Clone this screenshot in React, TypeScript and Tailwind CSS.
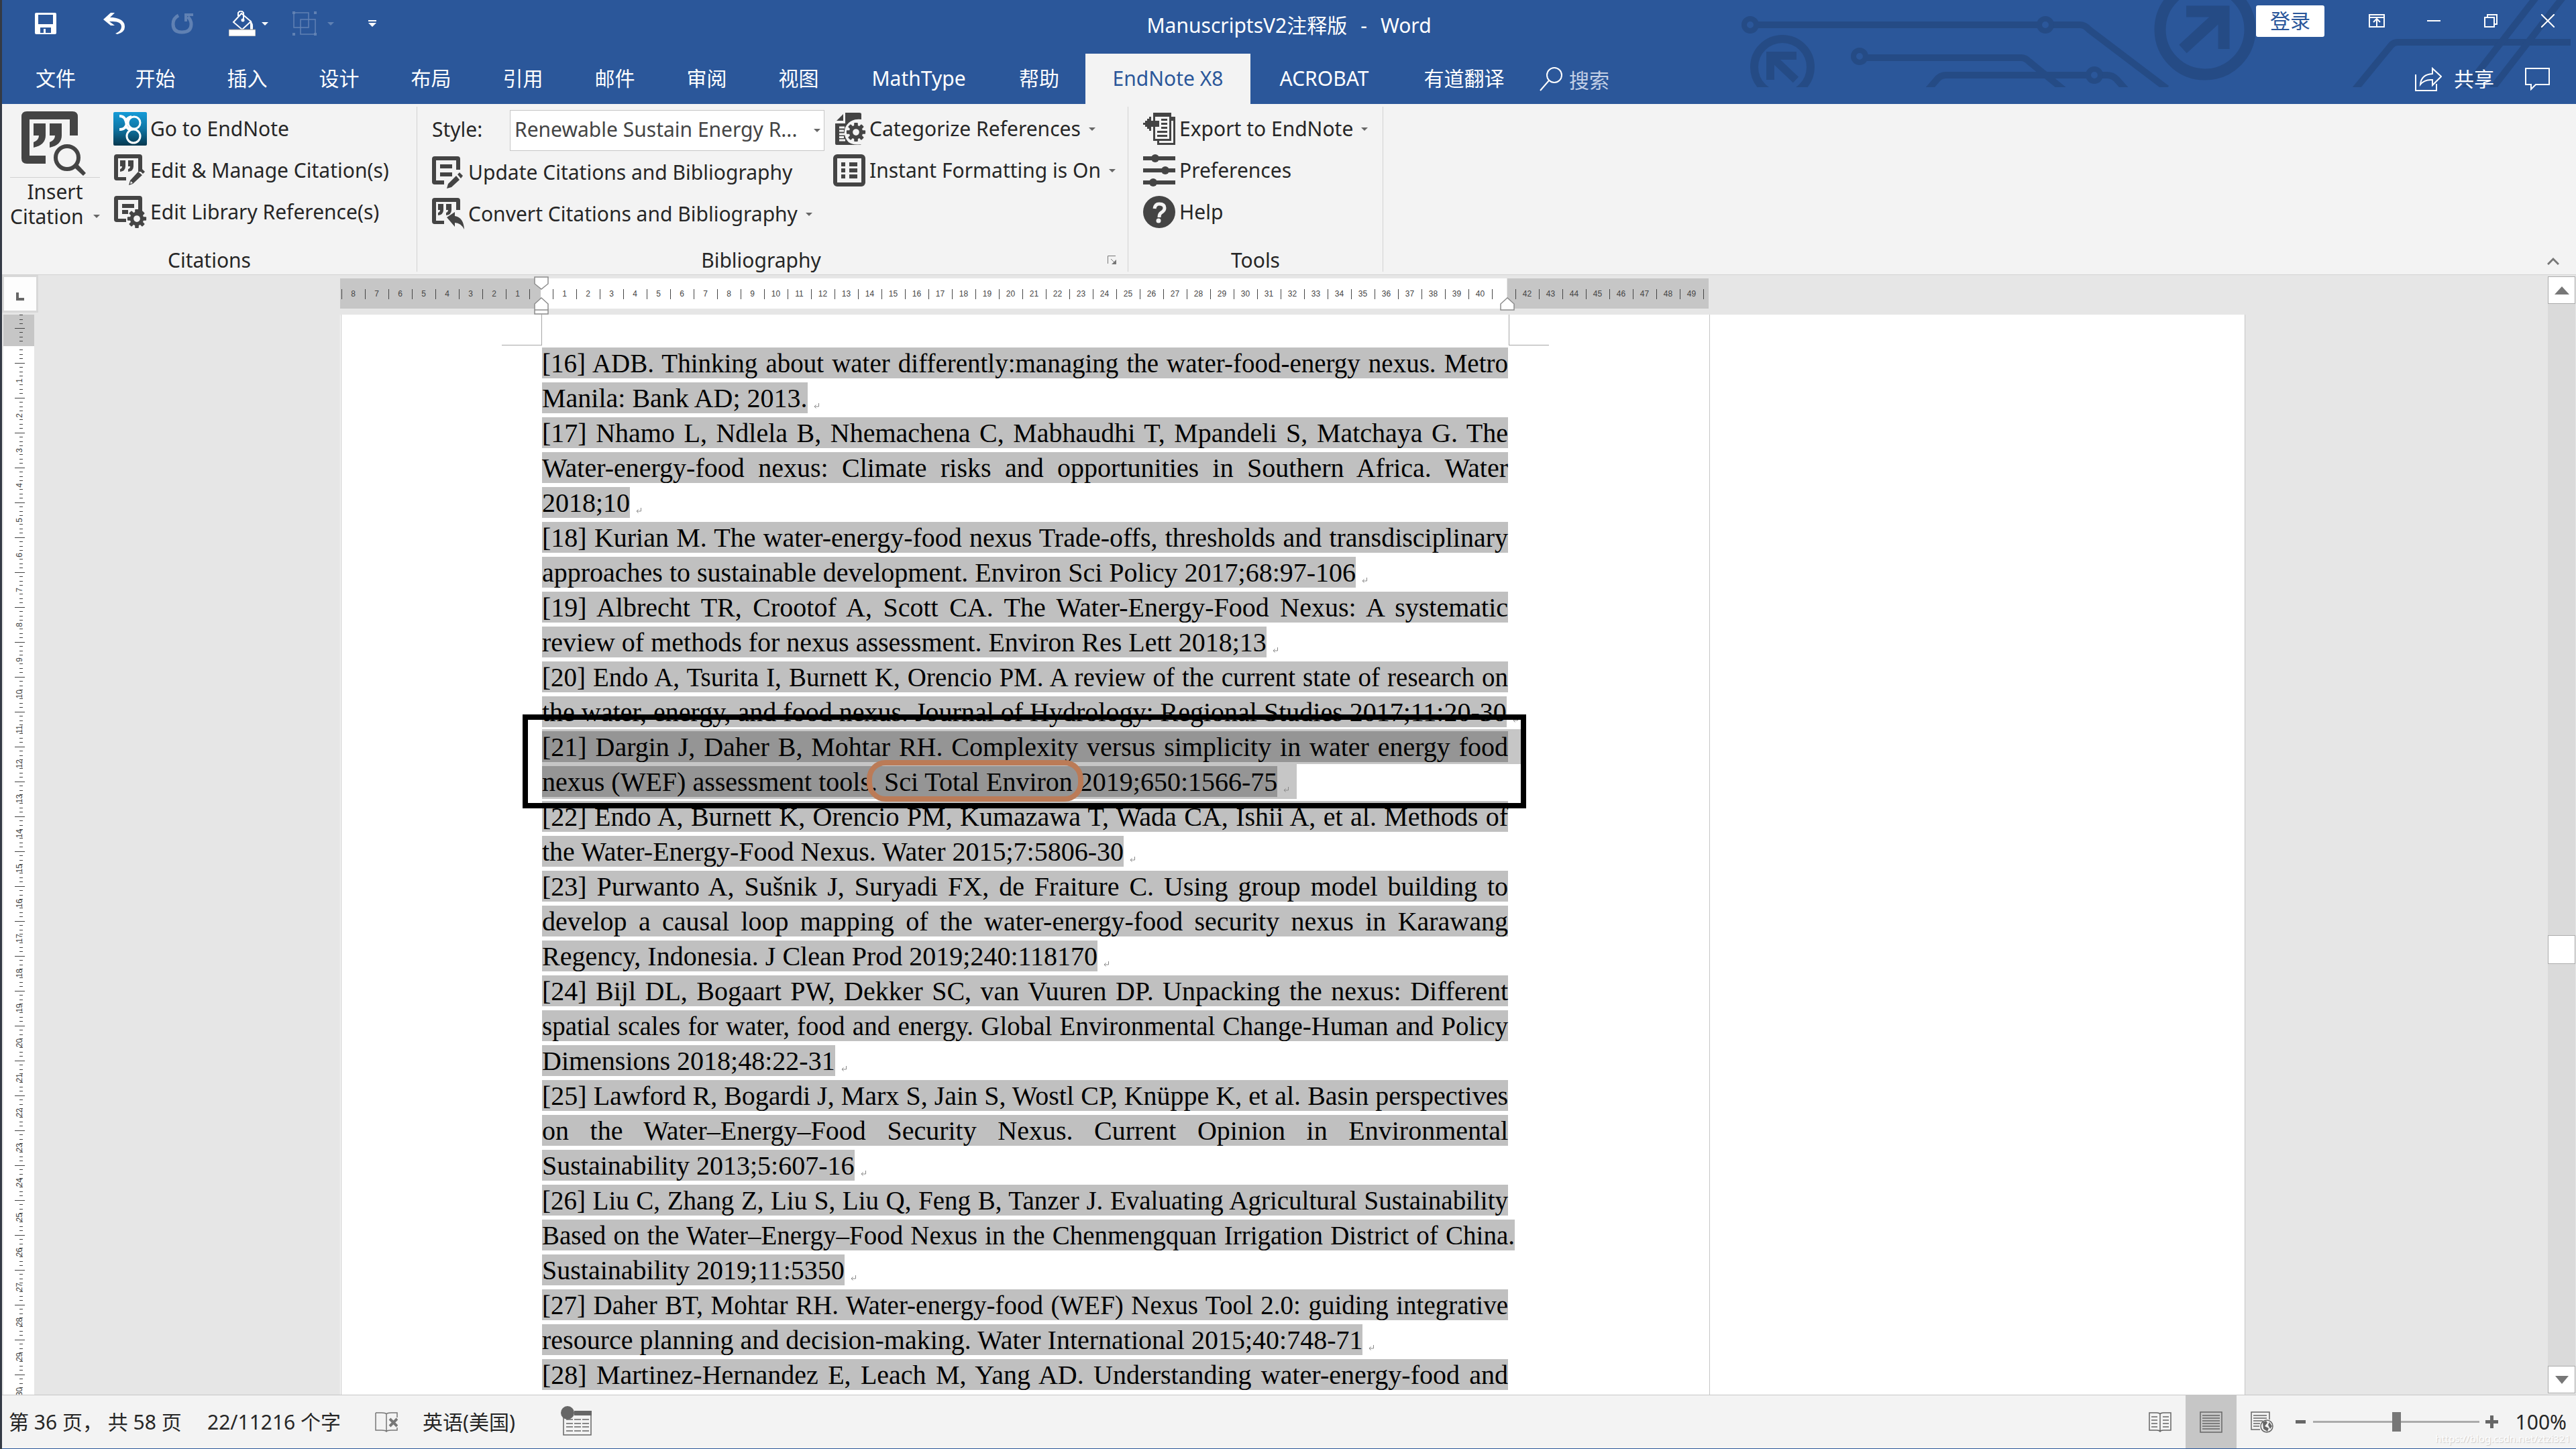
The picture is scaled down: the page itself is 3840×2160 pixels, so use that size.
import React from 'react';

type IconProps = { className?: string };

interface RefLine {
  text: string;
  fill?: boolean;
  tight?: boolean;
  hang?: boolean;
  mark?: boolean;
  active?: boolean;
}

const REFERENCES: RefLine[][] = [
  [
    { text: '[16] ADB. Thinking about water differently:managing the water-food-energy nexus. Metro', fill: true, tight: true },
    { text: 'Manila: Bank AD; 2013.', mark: true },
  ],
  [
    { text: '[17] Nhamo L, Ndlela B, Nhemachena C, Mabhaudhi T, Mpandeli S, Matchaya G. The', fill: true },
    { text: 'Water-energy-food nexus: Climate risks and opportunities in Southern Africa. Water', fill: true },
    { text: '2018;10', mark: true },
  ],
  [
    { text: '[18] Kurian M. The water-energy-food nexus Trade-offs, thresholds and transdisciplinary', fill: true },
    { text: 'approaches to sustainable development. Environ Sci Policy 2017;68:97-106', mark: true },
  ],
  [
    { text: '[19] Albrecht TR, Crootof A, Scott CA. The Water-Energy-Food Nexus: A systematic', fill: true },
    { text: 'review of methods for nexus assessment. Environ Res Lett 2018;13', mark: true },
  ],
  [
    { text: '[20] Endo A, Tsurita I, Burnett K, Orencio PM. A review of the current state of research on', fill: true, tight: true },
    { text: 'the water, energy, and food nexus. Journal of Hydrology: Regional Studies 2017;11:20-30', mark: true },
  ],
  [
    { text: '[21] Dargin J, Daher B, Mohtar RH. Complexity versus simplicity in water energy food', fill: true, active: true },
    { text: 'nexus (WEF) assessment tools. Sci Total Environ 2019;650:1566-75', mark: true, active: true },
  ],
  [
    { text: '[22] Endo A, Burnett K, Orencio PM, Kumazawa T, Wada CA, Ishii A, et al. Methods of', fill: true },
    { text: 'the Water-Energy-Food Nexus. Water 2015;7:5806-30', mark: true },
  ],
  [
    { text: '[23] Purwanto A, Sušnik J, Suryadi FX, de Fraiture C. Using group model building to', fill: true },
    { text: 'develop a causal loop mapping of the water-energy-food security nexus in Karawang', fill: true },
    { text: 'Regency, Indonesia. J Clean Prod 2019;240:118170', mark: true },
  ],
  [
    { text: '[24] Bijl DL, Bogaart PW, Dekker SC, van Vuuren DP. Unpacking the nexus: Different', fill: true },
    { text: 'spatial scales for water, food and energy. Global Environmental Change-Human and Policy', fill: true, tight: true },
    { text: 'Dimensions 2018;48:22-31', mark: true },
  ],
  [
    { text: '[25] Lawford R, Bogardi J, Marx S, Jain S, Wostl CP, Knüppe K, et al. Basin perspectives', fill: true },
    { text: 'on the Water–Energy–Food Security Nexus. Current Opinion in Environmental', fill: true },
    { text: 'Sustainability 2013;5:607-16', mark: true },
  ],
  [
    { text: '[26] Liu C, Zhang Z, Liu S, Liu Q, Feng B, Tanzer J. Evaluating Agricultural Sustainability', fill: true, tight: true },
    { text: 'Based on the Water–Energy–Food Nexus in the Chenmengquan Irrigation District of China.', fill: true, tight: true, hang: true },
    { text: 'Sustainability 2019;11:5350', mark: true },
  ],
  [
    { text: '[27] Daher BT, Mohtar RH. Water-energy-food (WEF) Nexus Tool 2.0: guiding integrative', fill: true, tight: true },
    { text: 'resource planning and decision-making. Water International 2015;40:748-71', mark: true },
  ],
  [{ text: '[28] Martinez-Hernandez E, Leach M, Yang AD. Understanding water-energy-food and', fill: true }],
];

const CJK_TABS = ['开始', '插入', '设计', '布局', '引用', '邮件', '审阅', '视图'];

const range = (from: number, to: number) => Array.from({ length: to - from + 1 }, (_, i) => from + i);

/* ---------- icons ---------- */

const Caret: React.FC<IconProps> = ({ className = 'text-[#666666]' }) => (
  <svg viewBox="0 0 10 5" className={`h-[5px] w-[10px] shrink-0 ${className}`} fill="currentColor">
    <path d="M0 0h10L5 5z" />
  </svg>
);

const Gear = ({ cx, cy, r }: { cx: number; cy: number; r: number }) => (
  <g transform={`translate(${cx} ${cy}) scale(${r / 12})`}>
    {[0, 45, 90, 135, 180, 225, 270, 315].map((a) => (
      <rect key={a} x="-2.6" y="-13" width="5.2" height="7" rx="1" transform={`rotate(${a})`} />
    ))}
    <circle r="7" fill="none" stroke="currentColor" strokeWidth="5" />
  </g>
);

const RibbonSvg: React.FC<{ children: React.ReactNode }> = ({ children }) => (
  <svg viewBox="0 0 48 48" className="h-12 w-12 shrink-0 overflow-visible text-[#444444]" fill="currentColor">
    {children}
  </svg>
);

const SheetFrame = () => (
  <path d="M4 0h34q4 0 4 4v22h-6V6H6v28h12v5H4q-4 0-4-4V4q0-4 4-4z" />
);

const InsertCitationIcon = () => (
  <svg viewBox="0 0 96 96" className="size-24 text-[#444444]" fill="currentColor">
    <path d="M8 0h68q8 0 8 8v28H72V12H12v54h24v12H8q-8 0-8-8V8q0-8 8-8z" />
    <path d="M18 18h18v18q0 14-18 18v-8q8-3 8-10h-8zM42 18h18v18q0 14-18 18v-8q8-3 8-10h-8z" />
    <circle cx="68" cy="69" r="17" fill="#f3f3f3" stroke="currentColor" strokeWidth="6" />
    <path d="M79 84l5-5 12 13-4 4z" />
  </svg>
);

const EndNoteIcon = () => (
  <svg viewBox="0 0 50 50" className="-mx-px size-[50px] shrink-0">
    <defs>
      <linearGradient id="endnote" x1="0" y1="0" x2="0" y2="1">
        <stop offset="0" stopColor="#159bd7" />
        <stop offset="0.5" stopColor="#0f75a4" />
        <stop offset="1" stopColor="#06384f" />
      </linearGradient>
    </defs>
    <rect width="50" height="50" rx="2" fill="url(#endnote)" />
    <g fill="none" stroke="#fff" strokeWidth="3">
      <circle cx="31" cy="16" r="9" />
      <circle cx="30" cy="36" r="10" />
      <path d="M9 6q7 0 9 6 3 7 0 10-2 4-9 4M27 7q-6 1-8 6M19 20q2 6 7 6" strokeWidth="4" />
    </g>
  </svg>
);

const EditCitationIcon = () => (
  <RibbonSvg>
    <SheetFrame />
    <path d="M9 9h8v9q0 7-8 8v-4q3-1 3-4H9zM21 9h8v9q0 7-8 8v-4q3-1 3-4h-3z" />
    <path d="M41 21l5 5-3 3-5-5zM36 26l6 5-14 13-6 2 2-7z" />
    <path d="M25 40l3 3-4 1z" fill="#f3f3f3" />
  </RibbonSvg>
);

const EditLibraryIcon = () => (
  <RibbonSvg>
    <SheetFrame />
    <path d="M12 12h18v6H12zM12 21h9v6h-9z" />
    <Gear cx={34} cy={34} r={13} />
  </RibbonSvg>
);

const UpdateIcon = () => (
  <RibbonSvg>
    <path d="M4 0h34q4 0 4 4v16h-6V6H6v30h12v6H4q-4 0-4-4V4q0-4 4-4z" />
    <path d="M12 12h18v6H12zM12 24h18v6H12z" />
    <path d="M41 24l5 5-3 4-5-6zM36 29l5 6-12 11-7 2 2-7z" />
  </RibbonSvg>
);

const ConvertIcon = () => (
  <RibbonSvg>
    <path d="M4 0h34q4 0 4 4v14h-6V6H6v28h12v5H4q-4 0-4-4V4q0-4 4-4z" />
    <path d="M9 9h8v9q0 7-8 8v-4q3-1 3-4H9zM21 9h8v9q0 7-8 8v-4q3-1 3-4h-3z" />
    <path d="M22 29l12-8v6q13 2 14 20-5-10-14-10v6z" />
  </RibbonSvg>
);

const CategorizeIcon = () => (
  <RibbonSvg>
    <path d="M5 12L15 2v10zM18 0h21q3 0 3 2v8q-17-2-24 12-4 13 5 22 7 5 19 3-1 1-3 1H5q-2 0-2-2V16h15z" />
    <path d="M9 22h8M9 27h7M9 32h8M9 36.500h7M9 41h9" stroke="#f3f3f3" strokeWidth="3" />
    <Gear cx={34} cy={29} r={13} />
  </RibbonSvg>
);

const InstantIcon = () => (
  <RibbonSvg>
    <rect x="3" y="3" width="42" height="42" rx="3" fill="none" stroke="currentColor" strokeWidth="6" />
    <path d="M12 12h6v6h-6zM24 12h12v6H24zM12 21h6v6h-6zM24 21h12v6H24zM12 30h6v6h-6zM24 30h12v6H24z" />
  </RibbonSvg>
);

const ExportIcon = () => (
  <RibbonSvg>
    <path d="M15 0h27v6h6v42H21v-6h-6V21h-3v6H9v-3H6v-3H3v-3H0v-3h3v-3h3V9h3V6h3v6h3z" />
    <path d="M18 6h21v33H18V21h6v-9h-6zM42 12h3v33H24v-3h18z" fill="#f3f3f3" />
    <path d="M27 9h9v3h-9zM27 15h9v3h-9zM27 21h9v3h-9zM21 27h15v3H21zM21 33h15v3H21z" />
  </RibbonSvg>
);

const PreferencesIcon = () => (
  <RibbonSvg>
    <path d="M0 3h48v6H0zM0 21h48v6H0zM0 39h48v6H0z" />
    <circle cx="18" cy="6" r="6" />
    <circle cx="33" cy="24" r="6" />
    <circle cx="15" cy="42" r="6" />
  </RibbonSvg>
);

const HelpIcon = () => (
  <RibbonSvg>
    <circle cx="24" cy="24" r="24" />
    <path d="M17 19q1-7 7-7 8 0 8 6 0 4-5 7-3 2-3 7" fill="none" stroke="#f3f3f3" strokeWidth="5" />
    <circle cx="23" cy="37" r="3.500" fill="#f3f3f3" />
  </RibbonSvg>
);

const CircuitArt = () => (
  <svg
    viewBox="0 0 1250 130"
    className="pointer-events-none absolute top-0 right-0 h-[130px] w-[1250px]"
    fill="none"
    stroke="#254b85"
    strokeWidth="10"
  >
    <circle cx="19" cy="37" r="9" strokeWidth="8" />
    <path d="M30 37h418M470 37h40q8 0 14 7l116 88" />
    <circle cx="459" cy="37" r="9" strokeWidth="8" />
    <circle cx="182" cy="84" r="9" strokeWidth="8" />
    <path d="M193 86h230q6 0 12 6l54 44" />
    <path d="M284 134l12-14q6-8 14-8h211M543 112h8q8 0 14 6l16 18" />
    <circle cx="532" cy="112" r="9" strokeWidth="8" />
    <circle cx="67" cy="100" r="42" strokeWidth="12" />
    <path d="M88 83H49v36M49 83l38 36" strokeWidth="12" />
    <circle cx="697" cy="44" r="67" strokeWidth="17" />
    <path d="M669 17h56v56M725 17l-61 56" strokeWidth="17" />
    <path d="M920 134l54-66q4-5 10-5h258" />
    <path d="M1192-6l-110 142M1232-6l-110 142" />
  </svg>
);

/* ---------- title bar ---------- */

const QuickAccess = () => (
  <div className="flex h-[70px] items-center pl-[49px] text-white">
    <button aria-label="保存" className="mr-[70px]">
      <svg viewBox="0 0 32 32" className="size-8" fill="currentColor">
        <path d="M2 0h28q2 0 2 2v28q0 2-2 2H2q-2 0-2-2V2q0-2 2-2zm3 3v14h22V3zm3 19v8h5v-6h3v6h8v-8z" fillRule="evenodd" />
      </svg>
    </button>
    <button aria-label="撤消" className="mr-[69px]">
      <svg viewBox="0 0 32 32" className="size-8" fill="currentColor">
        <path d="M0 10L11 0h6l-7 7h4q18 2 18 14 0 8-11 11l-3-1q9-4 9-10 0-8-13-8H9l8 6h-6z" />
      </svg>
    </button>
    <button aria-label="重复" className="mr-[52px] opacity-25">
      <svg viewBox="0 0 34 32" className="h-8 w-[34px]" fill="none" stroke="currentColor" strokeWidth="5">
        <path d="M11 4Q3 8 3 17q0 12 13 12 14 0 14-12 0-6-5-11" />
        <path d="M33 3H22v10" strokeWidth="4" />
      </svg>
    </button>
    <button aria-label="形状填充" className="mr-[36px] flex items-center gap-[9px]">
      <svg viewBox="0 0 40 38" className="h-[38px] w-10" fill="none" stroke="currentColor" strokeWidth="2">
        <path d="M19 4L33 16 20 28 7 17zM14 8V3q4-5 8 0v11" />
        <circle cx="21" cy="14" r="1.500" fill="currentColor" />
        <path d="M32 14q5 4 4 14h-4z" fill="currentColor" stroke="none" />
        <path d="M0 28h40v10H0z" fill="#fff" stroke="#8a8a8a" strokeWidth="1" />
      </svg>
      <Caret className="text-white" />
    </button>
    <button aria-label="组合" className="mr-[51px] flex items-center gap-[16px] opacity-25">
      <svg viewBox="0 0 36 36" className="size-9" fill="none" stroke="currentColor" strokeWidth="1.500">
        <path d="M2 2h22v22H2zM12 12h22v22H12z" />
        <path d="M0 0h4v4H0zM32 0h4v4h-4zM0 32h4v4H0zM32 32h4v4h-4z" fill="currentColor" stroke="none" />
      </svg>
      <Caret className="text-white" />
    </button>
    <button aria-label="自定义快速访问工具栏">
      <svg viewBox="0 0 12 10" className="h-[10px] w-3" fill="currentColor">
        <path d="M0 0h12v2H0zM0 4h12l-6 6z" />
      </svg>
    </button>
  </div>
);

const WindowControls = () => (
  <div className="flex h-[62px] items-center justify-end pr-[32px] text-white">
    <button className="mr-[66px] h-[47px] w-[102px] rounded-[3px] bg-white text-[#2b579a]">登录</button>
    <button aria-label="功能区显示选项" className="mr-[63px]">
      <svg viewBox="0 0 24 20" className="h-5 w-6" fill="none" stroke="currentColor" strokeWidth="2">
        <path d="M1 1h22v18H1zM1 5h22M12 18V8M7 12l5-5 5 5" />
      </svg>
    </button>
    <button aria-label="最小化" className="mr-[65px] h-5 w-5">
      <span className="block h-[2px] w-full bg-white" />
    </button>
    <button aria-label="向下还原" className="mr-[65px]">
      <svg viewBox="0 0 20 20" className="size-5" fill="none" stroke="currentColor" strokeWidth="2">
        <path d="M1 5h14v14H1zM5 5V1h14v14h-4" />
      </svg>
    </button>
    <button aria-label="关闭">
      <svg viewBox="0 0 20 20" className="size-5" fill="none" stroke="currentColor" strokeWidth="2">
        <path d="M0 0l20 20M20 0L0 20" />
      </svg>
    </button>
  </div>
);

const TabBar = () => (
  <nav className="relative flex h-[75px] items-stretch text-white [&>button]:pb-[2px]">
    <button className="w-[160px]">文件</button>
    {CJK_TABS.map((tab) => (
      <button key={tab} className="w-[137px]">
        {tab}
      </button>
    ))}
    <button className="w-[221px]">MathType</button>
    <button className="w-[138px]">帮助</button>
    <button className="w-[246px] bg-[#f3f3f3] text-[#2b579a]">EndNote X8</button>
    <button className="w-[220px]">ACROBAT</button>
    <button className="w-[197px]">有道翻译</button>
    <label className="ml-[14px] flex items-center gap-[10px]">
      <svg viewBox="0 0 34 36" className="h-9 w-[34px]" fill="none" stroke="currentColor" strokeWidth="2">
        <circle cx="22" cy="12" r="11" />
        <path d="M14 20L1 35" />
      </svg>
      <input
        type="text"
        placeholder="搜索"
        aria-label="搜索"
        className="mt-1 w-[180px] bg-transparent outline-none placeholder:text-[#c3d0e6] placeholder:opacity-100"
      />
    </label>
    <div className="ml-auto flex items-center pr-[39px]">
      <button className="mr-[46px] flex items-center gap-[18px]">
        <svg viewBox="0 0 40 36" className="h-9 w-10" fill="none" stroke="currentColor" strokeWidth="2">
          <path d="M1 11v24h31V25" />
          <path d="M8 26q1-15 18-16V2l13 12-13 13v-8q-12-1-18 7z" />
        </svg>
        共享
      </button>
      <button aria-label="批注">
        <svg viewBox="0 0 37 34" className="h-[34px] w-[37px]" fill="none" stroke="currentColor" strokeWidth="2">
          <path d="M1 1h35v24H16l-7 7v-7H1z" />
        </svg>
      </button>
    </div>
  </nav>
);

/* ---------- ribbon ---------- */

const RibbonButton: React.FC<{ icon: React.ReactNode; label: string; menu?: boolean }> = ({ icon, label, menu }) => (
  <button className="flex h-[62px] items-center gap-[6px] whitespace-nowrap">
    {icon}
    <span>{label}</span>
    {menu && <Caret className="ml-[6px] text-[#666666]" />}
  </button>
);

const GroupLabel: React.FC<{ children: React.ReactNode }> = ({ children }) => (
  <div className="flex h-[42px] items-center justify-center">{children}</div>
);

const Divider = () => <div className="my-1 w-px bg-[#d2d2d2]" />;

const Ribbon = () => (
  <section className="flex h-[255px] border-b border-[#d2d2d2] bg-[#f3f3f3] text-[#262626]">
    <div className="flex w-[618px] flex-col">
      <div className="flex flex-1 pt-[6px]">
        <button className="ml-[12px] flex w-[134px] flex-col pt-[5px]">
          <span className="flex h-[99px] w-full justify-center border-b border-[#d2d2d2] pr-1">
            <InsertCitationIcon />
          </span>
          <span className="mt-[2px] w-full text-center leading-[37px]">Insert</span>
          <span className="flex w-full items-center justify-between leading-[37px]">
            Citation
            <Caret />
          </span>
        </button>
        <div className="ml-[21px] flex flex-col items-start">
          <RibbonButton icon={<EndNoteIcon />} label="Go to EndNote" />
          <RibbonButton icon={<EditCitationIcon />} label="Edit & Manage Citation(s)" />
          <RibbonButton icon={<EditLibraryIcon />} label="Edit Library Reference(s)" />
        </div>
      </div>
      <GroupLabel>Citations</GroupLabel>
    </div>
    <Divider />
    <div className="flex w-[1059px] flex-col">
      <div className="flex flex-1">
        <div className="ml-[22px] flex w-[598px] flex-col items-start pt-2">
          <div className="mb-px flex h-[62px] items-center">
            <label htmlFor="output-style" className="w-[116px] pb-[2px]">
              Style:
            </label>
            <div className="grid w-[469px] items-center">
              <select
                id="output-style"
                className="h-[61px] w-full appearance-none rounded-none border border-[#c6c6c6] bg-white pb-[3px] pl-[6px] text-[#444444] [grid-area:1/1]"
              >
                <option>Renewable Sustain Energy R...</option>
              </select>
              <span className="pointer-events-none justify-self-end pr-[6px] [grid-area:1/1]">
                <Caret />
              </span>
            </div>
          </div>
          <RibbonButton icon={<UpdateIcon />} label="Update Citations and Bibliography" />
          <RibbonButton icon={<ConvertIcon />} label="Convert Citations and Bibliography" menu />
        </div>
        <div className="flex flex-col items-start pt-[6px]">
          <RibbonButton icon={<CategorizeIcon />} label="Categorize References" menu />
          <RibbonButton icon={<InstantIcon />} label="Instant Formatting is On" menu />
        </div>
      </div>
      <div className="flex items-center pr-4">
        <div className="flex-1 pl-[22px]">
          <GroupLabel>Bibliography</GroupLabel>
        </div>
        <button aria-label="Bibliography settings" className="ml-[26px]">
          <svg viewBox="0 0 14 14" className="size-[14px] text-[#777777]" fill="none" stroke="currentColor">
            <path d="M.5 12V.5H12M5 5l7 7" />
            <path d="M13 6v7H6z" fill="currentColor" stroke="none" />
          </svg>
        </button>
      </div>
    </div>
    <Divider />
    <div className="flex w-[379px] flex-col">
      <div className="ml-[22px] flex flex-1 flex-col items-start pt-[6px]">
        <RibbonButton icon={<ExportIcon />} label="Export to EndNote" menu />
        <RibbonButton icon={<PreferencesIcon />} label="Preferences" />
        <RibbonButton icon={<HelpIcon />} label="Help" />
      </div>
      <GroupLabel>Tools</GroupLabel>
    </div>
    <Divider />
    <button aria-label="折叠功能区" className="mt-auto mr-[25px] mb-[14px] ml-auto">
      <svg viewBox="0 0 18 12" className="h-3 w-[18px] text-[#777777]" fill="none" stroke="currentColor" strokeWidth="3">
        <path d="M1 11l8-8 8 8" />
      </svg>
    </button>
  </section>
);

/* ---------- rulers ---------- */

const VTicks: React.FC<{ short: number[]; long?: number; height: number }> = ({ short, long, height }) => (
  <svg width="46" height={height} className="block [grid-area:1/1]" fill="#444444">
    {short.map((y) => (
      <rect key={y} x="24" y={y} width="5" height="1" />
    ))}
    {long !== undefined && <rect x="17" y={long} width="15" height="1" />}
  </svg>
);

const VerticalRuler = () => (
  <div className="ml-[2px] min-h-0 w-[46px] flex-1 overflow-hidden bg-white">
    <div className="h-[47px] bg-[#c6c6c6]">
      <VTicks short={[0, 7, 13, 26, 33, 39]} long={20} height={47} />
    </div>
    <VTicks short={[5, 12, 18]} height={25} />
    {range(1, 30).map((n) => (
      <div key={n} className="grid h-[52px] items-center">
        <VTicks short={[6, 13, 19, 32, 39, 45]} long={0} height={52} />
        <span className="ml-[17px] w-[15px] rotate-180 text-center font-['Liberation_Sans',sans-serif] text-[12px] leading-[15px] text-[#444444] [grid-area:1/1] [writing-mode:vertical-rl]">
          {n}
        </span>
      </div>
    ))}
  </div>
);

const RulerCell: React.FC<{ n: number }> = ({ n }) => (
  <span className="flex h-[15px] w-[35px] items-center justify-center border-l border-[#444444] pr-px">{n}</span>
);

const IndentMarker: React.FC<{ kind: 'first' | 'hanging' | 'right' }> = ({ kind }) => (
  <svg
    viewBox="0 0 22 26"
    className="block h-[26px] w-[22px]"
    fill="#fff"
    stroke="#8c8c8c"
    strokeWidth="1.500"
  >
    {kind === 'first' && <path d="M1 1h20v10L11 19 1 11z" />}
    {kind === 'hanging' && <path d="M11 1l10 9v15H1V10zM1 19h20" />}
    {kind === 'right' && <path d="M11 1l10 9v9H1v-9z" />}
  </svg>
);

const HorizontalRuler = () => (
  <div className="relative flex h-[59px] pt-[5px] pb-[9px] font-['Liberation_Sans',sans-serif] text-[12px] leading-[15px] text-[#444444]">
    <div className="flex w-[299px] items-center bg-[#c6c6c6] pt-[2px] pl-[2px]">
      {range(1, 8).reverse().map((n) => (
        <RulerCell key={n} n={n} />
      ))}
      <span className="h-[15px] border-l border-[#444444]" />
    </div>
    <div className="flex w-[1440px] items-center bg-white pt-[2px] pl-[18px]">
      {range(1, 40).map((n) => (
        <RulerCell key={n} n={n} />
      ))}
      <span className="h-[15px] border-l border-[#444444]" />
    </div>
    <div className="ml-px flex w-[300px] items-center bg-[#c6c6c6] pt-[2px] pl-[12px]">
      {range(42, 49).map((n) => (
        <RulerCell key={n} n={n} />
      ))}
      <span className="h-[15px] border-l border-[#444444]" />
    </div>
    <div className="absolute top-[2px] left-[289px]">
      <IndentMarker kind="first" />
    </div>
    <div className="absolute top-[33px] left-[289px]">
      <IndentMarker kind="hanging" />
    </div>
    <div className="absolute top-[33px] left-[1729px]">
      <IndentMarker kind="right" />
    </div>
  </div>
);

/* ---------- document ---------- */

const ParagraphMark = () => (
  <svg viewBox="0 0 8 8" className="mt-[24px] ml-[9px] size-2 shrink-0 text-[#888888]" fill="none" stroke="currentColor">
    <path d="M7.500 0v5H1M3.500 2.500L1 5l2.500 2.500" />
  </svg>
);

const Line: React.FC<{ line: RefLine }> = ({ line }) => {
  const row = line.active ? (line.fill ? 'w-[1459px] bg-[#c6c6c6]' : 'w-fit bg-[#c6c6c6] pr-[12px]') : 'w-[1440px]';
  const fill = line.fill ? `shrink-0 [text-align-last:justify] ${line.hang ? 'w-[1450px]' : 'w-[1440px]'}` : '';

  return (
    <span className={`flex h-[52px] items-center whitespace-nowrap ${row}`}>
      <span
        className={`block h-[46px] leading-[48px] ${line.active ? 'bg-[#959595]' : 'bg-[#c0c0c0]'} ${
          line.tight ? 'text-[39px]' : ''
        } ${fill}`}
      >
        {line.text}
      </span>
      {line.mark && <ParagraphMark />}
    </span>
  );
};

const Page = () => (
  <div className="flex min-h-0 flex-1 bg-white">
    <div className="ml-px w-[2041px] border-x border-[#c6c6c6]">
      <div className="flex h-[46px] justify-between pr-[239px] pl-[239px]">
        <span className="w-[60px] border-r border-b border-[#a6a6a6]" />
        <span className="w-[60px] border-b border-l border-[#a6a6a6]" />
      </div>
      <article className="relative ml-[299px] w-[1440px] font-['Liberation_Serif',serif] text-[40px] text-black">
        {REFERENCES.map((lines, i) => (
          <p key={i}>
            {lines.map((line) => (
              <Line key={line.text} line={line} />
            ))}
          </p>
        ))}
        <div className="absolute top-[550px] left-[-29px] h-[140px] w-[1496px] border-8 border-black" />
        <div className="absolute top-[618px] left-[484px] h-[62px] w-[323px] rounded-[28px] border-8 border-[#bb7b57]" />
      </article>
    </div>
    <div className="flex-1 border-r border-[#c6c6c6]" />
  </div>
);

const ScrollBar = () => (
  <div className="flex w-[43px] flex-col pt-[2px] pr-px pb-[2px] pl-px">
    <button aria-label="向上滚动" className="flex h-[41px] items-center justify-center border border-[#ababab] bg-white">
      <svg viewBox="0 0 22 12" className="h-3 w-[22px]" fill="#777777">
        <path d="M0 12L11 0l11 12z" />
      </svg>
    </button>
    <div className="flex flex-1 flex-col bg-[#dadada]">
      <div className="grow-[941]" />
      <div className="h-[43px] border border-[#ababab] bg-white" />
      <div className="grow-[599]" />
    </div>
    <button aria-label="向下滚动" className="flex h-[41px] items-center justify-center border border-[#ababab] bg-white">
      <svg viewBox="0 0 20 12" className="h-3 w-5" fill="#777777">
        <path d="M0 0h20L10 12z" />
      </svg>
    </button>
  </div>
);

const Workspace = () => (
  <main className="flex min-h-0 flex-1 overflow-hidden bg-[#e6e6e6]">
    <div className="flex w-[54px] flex-col">
      <button
        aria-label="制表符"
        className="mb-[3px] flex h-[56px] shrink-0 items-center justify-center border-[3px] border-[#d8d8d8] bg-[#fdfdfd]"
      >
        <svg viewBox="0 0 12 12" className="mt-2 size-3" fill="#666666">
          <path d="M0 0h4v8h8v4H0z" />
        </svg>
      </button>
      <VerticalRuler />
    </div>
    <div className="flex min-w-0 flex-1 justify-center">
      <div className="flex w-[2840px] flex-col overflow-hidden">
        <HorizontalRuler />
        <Page />
      </div>
    </div>
    <ScrollBar />
  </main>
);

/* ---------- status bar ---------- */

const StatusBar = () => (
  <footer className="relative flex h-[81px] items-center border-t border-b border-t-[#c6c6c6] border-b-[#2b579a] bg-[#f3f3f3] text-[#262626]">
    <button className="ml-[10px] w-[296px] text-left whitespace-nowrap">第 36 页， 共 58 页</button>
    <button className="w-[250px] text-left whitespace-nowrap">22/11216 个字</button>
    <button aria-label="校对" className="mr-[37px]">
      <svg viewBox="0 0 34 30" className="h-[30px] w-[34px] text-[#777777]" fill="none" stroke="currentColor" strokeWidth="1.500">
        <path d="M1 1h9q6 0 7 2 1-2 7-2h9v7M1 1v26h9q6 0 7 2 1-2 7-2h9v-4M17 3v25" />
        <path d="M22 10l11 11M33 10L22 21" strokeWidth="4" />
      </svg>
    </button>
    <button className="w-[206px] text-left whitespace-nowrap">英语(美国)</button>
    <button aria-label="宏录制" className="pb-[4px]">
      <svg viewBox="0 0 46 44" className="h-11 w-[46px] text-[#666666]" fill="none" stroke="currentColor" strokeWidth="1.500">
        <path d="M4 14v29h41V8H22" />
        <path d="M8 20h34M8 26h34M8 31h34M8 37h34" strokeDasharray="10 2" />
        <path d="M20 7h26v7H20z" fill="currentColor" stroke="none" />
        <circle cx="10" cy="10" r="10" fill="currentColor" stroke="none" />
      </svg>
    </button>

    <div className="ml-auto flex items-center self-stretch pr-[14px]">
      <button aria-label="阅读视图" className="flex w-[76px] items-center justify-center self-stretch">
        <svg viewBox="0 0 34 30" className="h-[30px] w-[34px] text-[#666666]" fill="none" stroke="currentColor" strokeWidth="1.500">
          <path d="M1 1h11q4 0 5 2 1-2 5-2h11v26H22q-4 0-5 2-1-2-5-2H1zM17 3v26" />
          <path d="M4 7h9M4 12h9M4 17h9M4 22h9M21 7h9M21 12h9M21 17h9M21 22h9" />
        </svg>
      </button>
      <button aria-label="页面视图" className="flex w-[76px] items-center justify-center self-stretch bg-[#c6c6c6]">
        <svg viewBox="0 0 34 32" className="h-8 w-[34px] text-[#666666]" fill="none" stroke="currentColor" strokeWidth="1.500">
          <path d="M1 1h32v30H1zM4 6h26M4 10h26M4 14h26M4 18h26M4 22h26M4 26h26" />
        </svg>
      </button>
      <button aria-label="Web 版式视图" className="flex w-[76px] items-center justify-center self-stretch">
        <svg viewBox="0 0 34 32" className="h-8 w-[34px] text-[#666666]" fill="none" stroke="currentColor" strokeWidth="1.500">
          <path d="M14 27H1V1h27v11M4 6h20M4 10h20M4 14h14M4 18h10M4 22h9" />
          <circle cx="24" cy="22" r="9" />
          <path d="M18 16l5-2 2 3-4 5 6 3-2 5-6-4zM28 16l4 6-3 4-3-6z" fill="currentColor" stroke="none" />
        </svg>
      </button>
      <button aria-label="缩小" className="mr-[10px] ml-[12px] w-4">
        <span className="block h-[5px] w-[15px] bg-[#666666]" />
      </button>
      <input
        type="range"
        aria-label="缩放级别"
        min={0}
        max={100}
        defaultValue={50}
        className="h-[29px] w-[248px] appearance-none bg-[linear-gradient(#ababab,#ababab)] bg-[length:100%_3px] bg-center bg-no-repeat [&::-webkit-slider-thumb]:h-[29px] [&::-webkit-slider-thumb]:w-[13px] [&::-webkit-slider-thumb]:appearance-none [&::-webkit-slider-thumb]:bg-[#777777]"
      />
      <button aria-label="放大" className="mr-[18px] ml-[9px]">
        <svg viewBox="0 0 19 19" className="size-[19px]" fill="#666666">
          <path d="M7 0h5v7h7v5h-7v7H7v-7H0V7h7z" />
        </svg>
      </button>
      <button className="w-[84px] text-right">100%</button>
    </div>
    <span className="pointer-events-none absolute right-[8px] bottom-[4px] text-[15px] leading-[22px] text-white [text-shadow:1px_1px_1px_#c8c8c8]">
      https://blog.csdn.net/ztzi321
    </span>
  </footer>
);

export default function App() {
  return (
    <div className="flex h-screen flex-col overflow-hidden border-l-[3px] border-[#343a45] font-['Noto_Sans','Noto_Sans_CJK_SC',sans-serif] text-[30px] leading-[40px]">
      <header className="relative bg-[#2b579a]">
        <CircuitArt />
        <div className="relative grid h-[80px] grid-cols-[1fr_auto_1fr] items-start">
          <QuickAccess />
          <h1 className="flex h-[76px] items-center gap-[20px] text-white">
            <span>ManuscriptsV2注释版</span>
            <span>-</span>
            <span>Word</span>
          </h1>
          <WindowControls />
        </div>
        <TabBar />
      </header>
      <Ribbon />
      <Workspace />
      <StatusBar />
    </div>
  );
}
